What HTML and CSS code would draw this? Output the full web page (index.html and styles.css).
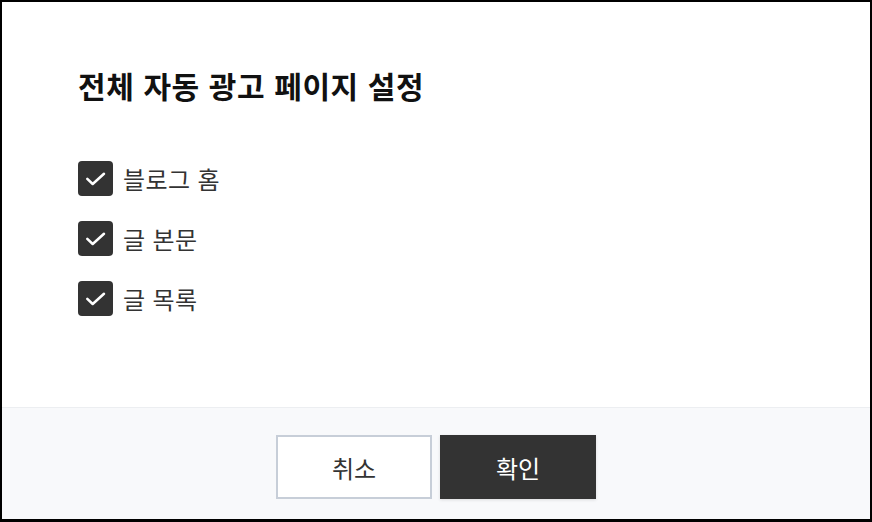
FILE: index.html
```html
<!DOCTYPE html>
<html lang="ko">
<head>
<meta charset="utf-8">
<link rel="stylesheet" href="styles.css">
</head>
<body>
<div class="dialog">
  <div class="content">
    <h1 class="title">전체 자동 광고 페이지 설정</h1>
    <ul class="options">
      <li class="option">
        <span class="box"><svg viewBox="0 0 35 35" width="35" height="35"><path d="M9.3 17.8 L14.7 23 L26 12.8" fill="none" stroke="#fff" stroke-width="2.5" stroke-linecap="round" stroke-linejoin="round"/></svg></span>
        <span class="label">블로그 홈</span>
      </li>
      <li class="option">
        <span class="box"><svg viewBox="0 0 35 35" width="35" height="35"><path d="M9.3 17.8 L14.7 23 L26 12.8" fill="none" stroke="#fff" stroke-width="2.5" stroke-linecap="round" stroke-linejoin="round"/></svg></span>
        <span class="label">글 본문</span>
      </li>
      <li class="option">
        <span class="box"><svg viewBox="0 0 35 35" width="35" height="35"><path d="M9.3 17.8 L14.7 23 L26 12.8" fill="none" stroke="#fff" stroke-width="2.5" stroke-linecap="round" stroke-linejoin="round"/></svg></span>
        <span class="label">글 목록</span>
      </li>
    </ul>
  </div>
  <div class="footer">
    <button class="btn btn-cancel">취소</button>
    <button class="btn btn-ok">확인</button>
  </div>
</div>
</body>
</html>
```

FILE: styles.css
```css
* { box-sizing: border-box; }
html, body {
  margin: 0;
  padding: 0;
  background: #fff;
}
body {
  font-family: "Noto Sans CJK KR", "Noto Sans", sans-serif;
  color: #333;
}
.dialog {
  width: 872px;
  height: 522px;
  border: 2px solid #000;
  border-bottom-width: 3px;
  display: flex;
  flex-direction: column;
  background: #fff;
}
.content {
  flex: 1;
  padding: 61px 0 0 76px;
}
.title {
  margin: 0;
  font-size: 30px;
  line-height: 44px;
  font-weight: 700;
  letter-spacing: 0.6px;
  color: #111;
}
.options {
  list-style: none;
  margin: 54px 0 0;
  padding: 0;
  display: flex;
  flex-direction: column;
  gap: 25px;
}
.option {
  display: flex;
  align-items: center;
  gap: 10px;
  height: 35px;
}
.box {
  width: 35px;
  height: 35px;
  border-radius: 4px;
  background: #333;
  display: block;
}
.box svg { display: block; }
.label {
  font-size: 24px;
  line-height: 35px;
  letter-spacing: 0.4px;
  color: #333;
}
.footer {
  height: 112px;
  background: #f8f9fb;
  border-top: 1px solid #eceef1;
  display: flex;
  justify-content: center;
  align-items: flex-start;
  padding-top: 27px;
  gap: 8px;
}
.btn {
  width: 156px;
  height: 64px;
  font-family: inherit;
  font-size: 24px;
  padding: 0;
  border-radius: 0;
  cursor: pointer;
}
.btn-cancel {
  background: #fff;
  color: #333;
  border: 2px solid #c7ced8;
}
.btn-ok {
  background: #333;
  color: #fff;
  border: none;
  box-shadow: 0 1px 3px rgba(0,0,0,0.12);
}
```
